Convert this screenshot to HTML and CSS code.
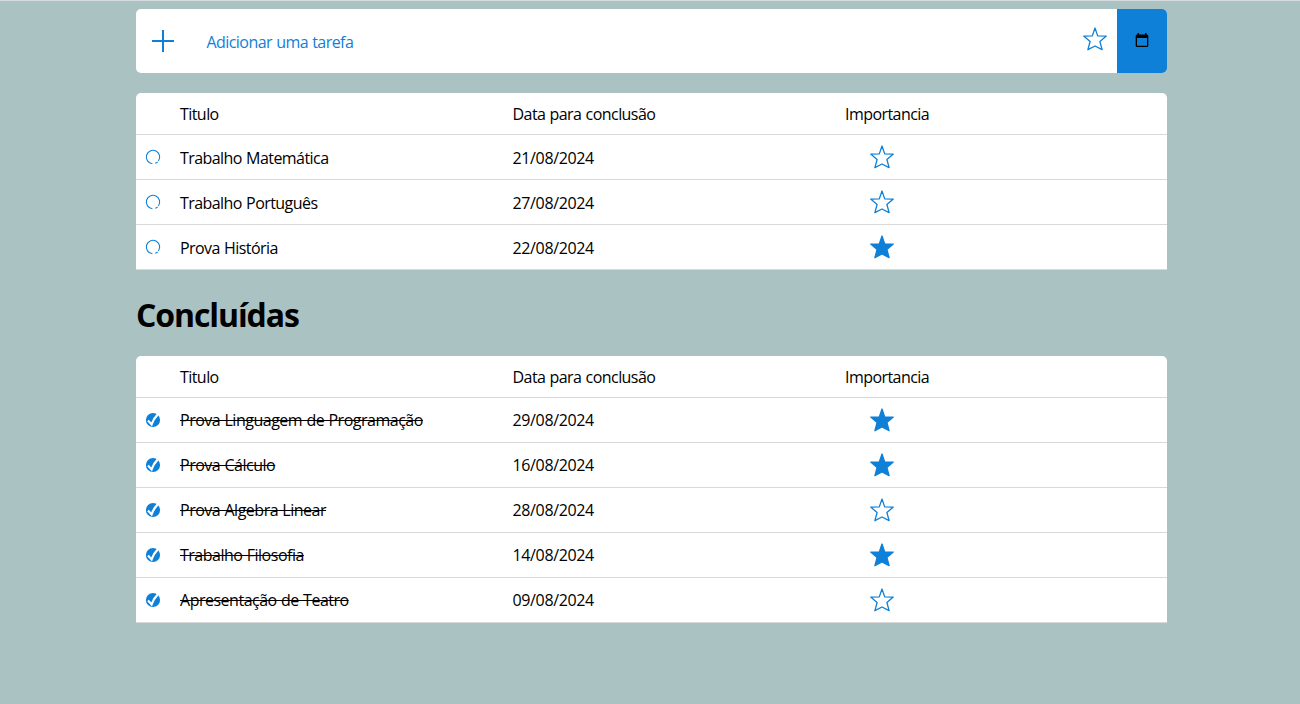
FILE: index.html
```html
<!DOCTYPE html>
<html lang="pt-BR">
<head>
<meta charset="utf-8">
<title>Tarefas</title>
<link rel="stylesheet" href="styles.css">
</head>
<body>
<svg class="defs" aria-hidden="true">
  <symbol id="star" viewBox="0 0 24 24"><path d="M12 1 L14.7 8.9 L23.3 9.1 L16.9 14.5 L19.1 22.7 L12 19 L4.9 22.7 L7.1 14.5 L0.7 9.1 L9.3 8.9 Z" stroke-width="1.3" stroke-linejoin="round"/></symbol>
  <symbol id="open" viewBox="0 0 16 16"><path d="M10.3 14.3 A6.7 6.7 0 0 0 12.6 12.9 M13.4 12 A6.7 6.7 0 1 0 7.4 14.7" fill="none" stroke="#0f80d7" stroke-width="1.1"/></symbol>
  <symbol id="done" viewBox="0 0 16 16"><circle cx="8" cy="8" r="7.1" fill="#0f80d7"/><path d="M3 8.6 L6.6 12.4 Q8.6 6.6 12.8 2.4" fill="none" stroke="#fff" stroke-width="2.2"/></symbol>
</svg>
<main class="page">
  <form class="add">
    <svg class="plus" viewBox="0 0 22 22"><path d="M11 0V22M0 11H22" stroke="#0f80d7" stroke-width="2"/></svg>
    <span class="prompt">Adicionar uma tarefa</span>
    <svg class="star"><use href="#star"/></svg>
    <span class="date"><svg class="calendar" viewBox="0 0 14 15"><path d="M2.5 0H4V1.5H10V0H11.5V1.5H12Q13.3 1.5 13.3 3V12.5Q13.3 14 12 14H2Q.7 14 .7 12.5V3Q.7 1.5 2 1.5H2.5Z M2 5V12.7H12V5Z" fill-rule="evenodd"/></svg></span>
  </form>

  <section class="table">
    <div class="row head"><span></span><span class="title">Titulo</span><span class="due">Data para conclusão</span><span class="rank">Importancia</span></div>
    <div class="row"><svg class="check"><use href="#open"/></svg><span class="title">Trabalho Matemática</span><span class="due">21/08/2024</span><svg class="star"><use href="#star"/></svg></div>
    <div class="row"><svg class="check"><use href="#open"/></svg><span class="title">Trabalho Português</span><span class="due">27/08/2024</span><svg class="star"><use href="#star"/></svg></div>
    <div class="row"><svg class="check"><use href="#open"/></svg><span class="title">Prova História</span><span class="due">22/08/2024</span><svg class="star full"><use href="#star"/></svg></div>
  </section>

  <h1 class="heading">Concluídas</h1>

  <section class="table completed">
    <div class="row head"><span></span><span class="title">Titulo</span><span class="due">Data para conclusão</span><span class="rank">Importancia</span></div>
    <div class="row"><svg class="check"><use href="#done"/></svg><span class="title">Prova Linguagem de Programação</span><span class="due">29/08/2024</span><svg class="star full"><use href="#star"/></svg></div>
    <div class="row"><svg class="check"><use href="#done"/></svg><span class="title">Prova Cálculo</span><span class="due">16/08/2024</span><svg class="star full"><use href="#star"/></svg></div>
    <div class="row"><svg class="check"><use href="#done"/></svg><span class="title">Prova Algebra Linear</span><span class="due">28/08/2024</span><svg class="star"><use href="#star"/></svg></div>
    <div class="row"><svg class="check"><use href="#done"/></svg><span class="title">Trabalho Filosofia</span><span class="due">14/08/2024</span><svg class="star full"><use href="#star"/></svg></div>
    <div class="row"><svg class="check"><use href="#done"/></svg><span class="title">Apresentação de Teatro</span><span class="due">09/08/2024</span><svg class="star"><use href="#star"/></svg></div>
  </section>
</main>
</body>
</html>
```
FILE: styles.css
```css
* { box-sizing: border-box; }
body {
  margin: 0;
  min-height: 704px;
  background: #abc2c2;
  border-top: 1px solid #d5dbdf;
  font: 16px/22px "Segoe UI", "Open Sans", "Noto Sans", sans-serif;
  letter-spacing: -0.56px;
  word-spacing: 0.6px;
  color: #000;
}
.defs { display: none; }
.page { width: 1031px; margin: 0 0 0 136px; padding-top: 8px; }
.add {
  display: flex;
  align-items: center;
  height: 64px;
  margin-bottom: 20px;
  padding-left: 16px;
  background: #fff;
  border-radius: 5px;
  overflow: hidden;
  color: #0f80d7;
}
.plus { width: 22px; height: 22px; }
.prompt { margin-left: 32.5px; padding-top: 2px; }
.star { width: 24px; height: 24px; fill: none; stroke: #0f80d7; }
.star.full { fill: #0f80d7; }
.add .star { margin: 0 10px 4px auto; }
.date {
  display: flex;
  align-items: center;
  justify-content: center;
  width: 50px;
  height: 64px;
  background: #0f80d7;
}
.calendar { width: 14px; height: 15px; margin-bottom: 2px; }
.table { background: #fff; border-radius: 5px 5px 0 0; overflow: hidden; }
.row {
  display: grid;
  grid-template-columns: 44px 332.5px 332.5px 1fr;
  align-items: center;
  height: 45px;
  border-bottom: 1px solid #d9d9d9;
}
.row.head { height: 42px; }
.row.head > span { padding-top: 1px; }
.row:not(.head) .title, .row:not(.head) .due { padding-top: 2px; }
.row:not(.head) .due { letter-spacing: -0.35px; }
.check { width: 16px; height: 16px; margin-left: 9px; }
.row .star { margin-left: 25px; }
.heading {
  margin: 22px 0 18px;
  font-size: 32px;
  line-height: 46px;
  font-weight: 700;
  letter-spacing: -1.1px;
}
.completed .row:not(.head) .title {
  letter-spacing: -0.49px;
  text-decoration: line-through;
  text-decoration-thickness: 1px;
}
.completed .row:not(.head) .title, .completed .row:not(.head) .due { padding-top: 0; }
```
